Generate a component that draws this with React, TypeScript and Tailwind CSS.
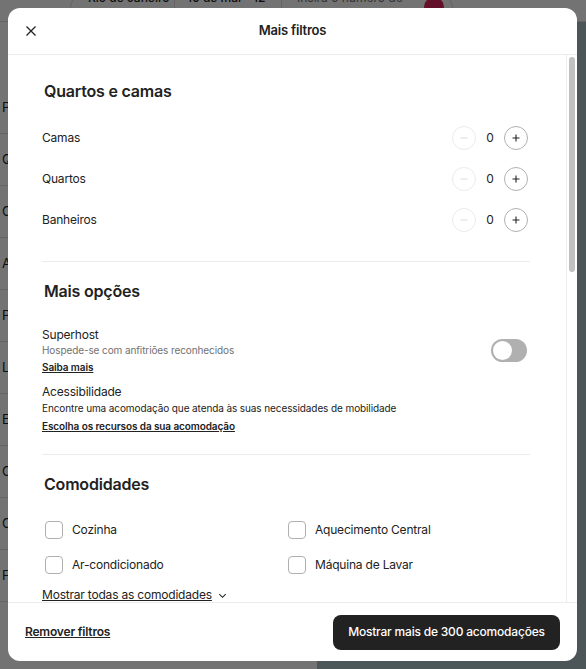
import React, { useState } from "react";

const font = { fontFamily: "Inter, 'Noto Sans', sans-serif" };

const Stepper = ({ label }: { label: string }) => {
  const [value, setValue] = useState(0);
  return (
    <div className="h-[41px] flex items-center justify-between">
      <span className="text-[12px] tracking-[-0.2px] text-[#222]">{label}</span>
      <div className="flex items-center">
        <button
          onClick={() => value > 0 && setValue(value - 1)}
          className={`w-[24px] h-[24px] rounded-full border flex items-center justify-center ${
            value > 0 ? "border-[#b0b0b0] text-[#222]" : "border-[#ebebeb] text-[#dcdcdc]"
          }`}
        >
          <svg width="10" height="10" viewBox="0 0 10 10">
            <path d="M1.5 5h7" stroke="currentColor" strokeWidth="1.1" />
          </svg>
        </button>
        <span className="w-[28px] text-center text-[12px] text-[#222]">{value}</span>
        <button
          onClick={() => setValue(value + 1)}
          className="w-[24px] h-[24px] rounded-full border border-[#b0b0b0] text-[#222] flex items-center justify-center"
        >
          <svg width="10" height="10" viewBox="0 0 10 10">
            <path d="M1.5 5h7M5 1.5v7" stroke="currentColor" strokeWidth="1.1" />
          </svg>
        </button>
      </div>
    </div>
  );
};

const Check = ({ label }: { label: string }) => {
  const [on, setOn] = useState(false);
  return (
    <label className="h-[35px] flex items-center gap-[9px] pl-[3px] cursor-pointer">
      <span
        onClick={() => setOn(!on)}
        className={`w-[18px] h-[18px] rounded-[4px] border ${on ? "bg-[#222] border-[#222]" : "border-[#b0b0b0]"}`}
      />
      <span className="text-[12px] tracking-[-0.2px] text-[#222]">{label}</span>
    </label>
  );
};

const Backdrop = () => (
  <div className="absolute inset-0 flex flex-col bg-white">
    <div className="h-[22px] flex items-center pl-[70px] bg-white border-b border-[#ddd]">
      <div className="flex items-center h-[22px] w-[383px] rounded-full border border-[#ddd] text-[12px] text-[#222] -mt-[8px]">
        <span className="w-[103px] pl-[17px] font-medium">Rio de Janeiro - RJ</span>
        <span className="w-[107px] pl-[12px] border-l border-[#ddd] font-medium">10 de mai - 12 de mai</span>
        <span className="flex-1 pl-[15px] border-l border-[#ddd] text-[#717171]">Insira o número de hóspedes</span>
        <span className="w-[20px] h-[20px] rounded-full bg-[#e0245e] mr-[8px]" />
      </div>
    </div>
    <div className="flex flex-1">
      <div className="w-[317px] flex flex-col pt-[60px] text-[13px] text-[#222]">
        {["Privado", "Quarto inteiro", "Casa inteira", "Apartamento", "Pousada", "Loft inteiro", "Estúdio", "Casa de campo", "Chalé", "Flat"].map((t) => (
          <div key={t} className="h-[52px] flex items-center px-[2px] border-b border-[#ddd]">
            {t}
          </div>
        ))}
      </div>
      <div className="flex-1 bg-[#a9bcc4]" />
    </div>
  </div>
);

export default function App() {
  return (
    <div className="relative w-[586px] h-[669px] overflow-hidden" style={font}>
      <Backdrop />
      <div className="absolute inset-0 bg-black/55" />

      <div className="absolute left-[8px] top-[8px] w-[569px] h-[653px] bg-white rounded-[12px] flex flex-col overflow-hidden">
        <div className="relative h-[47px] shrink-0 border-b border-[#ebebeb] flex items-center justify-center">
          <button className="absolute left-[17px] top-[17px] text-[#222]">
            <svg width="12" height="12" viewBox="0 0 12 12">
              <path d="M1.5 1.5l9 9M10.5 1.5l-9 9" stroke="currentColor" strokeWidth="1.3" />
            </svg>
          </button>
          <h2 className="text-[13px] tracking-[-0.2px] font-semibold text-[#222]">Mais filtros</h2>
        </div>

        <div className="flex flex-1 overflow-hidden">
          <div className="flex-1 pl-[34px] pr-[38px] overflow-hidden">
            <section className="pt-[25px] pb-[21px] border-b border-[#ebebeb] mr-[-2px]">
              <h3 className="text-[16px] leading-[22px] tracking-[-0.2px] font-semibold text-[#222] pl-[2px] mb-[15px]">Quartos e camas</h3>
              <div className="mr-[2px]">
                <Stepper label="Camas" />
                <Stepper label="Quartos" />
                <Stepper label="Banheiros" />
              </div>
            </section>

            <section className="pt-[18px] pb-[21px] border-b border-[#ebebeb] mr-[-2px]">
              <h3 className="text-[16px] leading-[22px] tracking-[-0.2px] font-semibold text-[#222] pl-[2px] mb-[24px]">Mais opções</h3>
              <div className="flex items-center justify-between mr-[3px]">
                <div className="flex flex-col">
                  <span className="text-[12px] leading-[17px] tracking-[-0.2px] text-[#222]">Superhost</span>
                  <span className="text-[10px] leading-[14px] tracking-[-0.1px] text-[#717171]">Hospede-se com anfitriões reconhecidos</span>
                  <a className="mt-[3px] text-[10px] leading-[14px] tracking-[-0.1px] font-semibold text-[#222] underline">Saiba mais</a>
                </div>
                <div className="w-[36px] h-[23px] rounded-full bg-[#b0b0b0] p-[2px]">
                  <div className="w-[19px] h-[19px] rounded-full bg-white" />
                </div>
              </div>
              <div className="flex flex-col mt-[9px]">
                <span className="text-[12px] leading-[18px] tracking-[-0.2px] text-[#222]">Acessibilidade</span>
                <span className="text-[10px] leading-[14px] tracking-[-0.1px] text-[#222]">
                  Encontre uma acomodação que atenda às suas necessidades de mobilidade
                </span>
                <a className="mt-[4px] text-[10px] leading-[14px] tracking-[-0.1px] font-semibold text-[#222] underline">
                  Escolha os recursos da sua acomodação
                </a>
              </div>
            </section>

            <section className="pt-[18px]">
              <h3 className="text-[16px] leading-[22px] tracking-[-0.2px] font-semibold text-[#222] pl-[2px] mb-[17px]">Comodidades</h3>
              <div className="grid grid-cols-2">
                <Check label="Cozinha" />
                <Check label="Aquecimento Central" />
                <Check label="Ar-condicionado" />
                <Check label="Máquina de Lavar" />
              </div>
              <a className="mt-[4px] flex items-center gap-[6px] text-[12px] leading-[18px] tracking-[-0.2px] text-[#222]">
                <span className="underline">Mostrar todas as comodidades</span>
                <svg width="9" height="9" viewBox="0 0 10 10">
                  <path d="M1.5 3.5L5 7l3.5-3.5" fill="none" stroke="currentColor" strokeWidth="1.2" />
                </svg>
              </a>
            </section>
          </div>
          <div className="w-[11px] shrink-0 border-l border-[#ededed] pt-[2px] flex justify-center">
            <div className="w-[6px] h-[215px] rounded-full bg-[#c1c1c1]" />
          </div>
        </div>

        <div className="h-[59px] shrink-0 border-t border-[#ebebeb] flex items-center justify-between pl-[17px] pr-[17px]">
          <a className="text-[12px] tracking-[-0.2px] font-semibold text-[#222] underline">Remover filtros</a>
          <button className="w-[227px] h-[35px] rounded-[8px] bg-[#222] text-white text-[12px] tracking-[-0.2px] font-medium">
            Mostrar mais de 300 acomodações
          </button>
        </div>
      </div>
    </div>
  );
}
